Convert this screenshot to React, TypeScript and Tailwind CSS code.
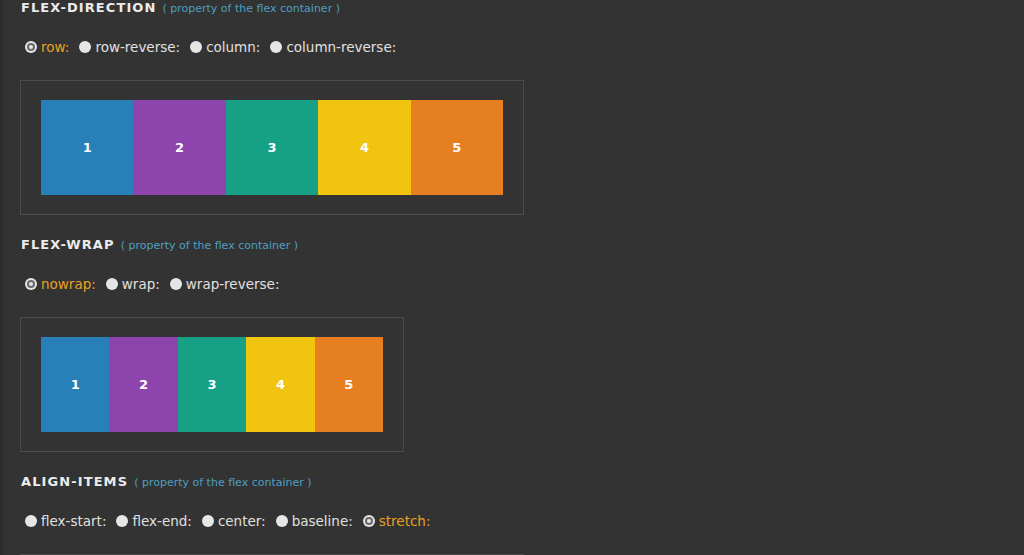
import React from "react";

type Section = {
  title: string;
  options: string[];
  selected: string;
  width: string;
};

const sections: Section[] = [
  {
    title: "FLEX-DIRECTION",
    options: ["row", "row-reverse", "column", "column-reverse"],
    selected: "row",
    width: "w-[504px]",
  },
  {
    title: "FLEX-WRAP",
    options: ["nowrap", "wrap", "wrap-reverse"],
    selected: "nowrap",
    width: "w-[384px]",
  },
  {
    title: "ALIGN-ITEMS",
    options: ["flex-start", "flex-end", "center", "baseline", "stretch"],
    selected: "stretch",
    width: "w-[504px]",
  },
];

const boxes = [
  { n: 1, bg: "bg-[#2980b9]" },
  { n: 2, bg: "bg-[#8e44ad]" },
  { n: 3, bg: "bg-[#16a085]" },
  { n: 4, bg: "bg-[#f1c40f]" },
  { n: 5, bg: "bg-[#e67e22]" },
];

function Radio({ checked }: { checked: boolean }) {
  if (checked) {
    return (
      <span className="w-3 h-3 rounded-full bg-[#e6e6e6] flex items-center justify-center shrink-0">
        <span className="w-2 h-2 rounded-full bg-[#6a6a6a] flex items-center justify-center">
          <span className="w-1 h-1 rounded-full bg-[#e6e6e6]" />
        </span>
      </span>
    );
  }
  return <span className="w-3 h-3 rounded-full bg-[#e6e6e6] shrink-0" />;
}

function FlexSection({ section }: { section: Section }) {
  return (
    <section className="mb-[22px]">
      <h3 className="flex items-baseline gap-[6px] h-4 leading-4">
        <span className="text-[13px] font-bold tracking-[1.1px] text-[#ececec]">{section.title}</span>
        <span className="text-[11px] text-[#4e9fc0]">( property of the flex container )</span>
      </h3>

      <div className="mt-[21px] h-5 flex items-center pl-1 text-[13.5px]">
        {section.options.map((opt) => {
          const on = opt === section.selected;
          return (
            <label key={opt} className="flex items-center gap-1 mr-[10px]">
              <Radio checked={on} />
              <span className={on ? "text-[#e8a022]" : "text-[#e0e0e0]"}>{opt}:</span>
            </label>
          );
        })}
      </div>

      <div className={`mt-[23px] -ml-px ${section.width} border border-[#4b4b4b] px-5 py-[19px]`}>
        <div className="flex h-[95px]">
          {boxes.map((b) => (
            <div
              key={b.n}
              className={`flex-1 ${b.bg} flex items-center justify-center text-[13px] font-semibold text-white`}
            >
              {b.n}
            </div>
          ))}
        </div>
      </div>
    </section>
  );
}

export default function App() {
  return (
    <div
      className="h-[555px] overflow-hidden bg-[#333333] border-l-[3px] border-[#2c2c2c] pl-[18px]"
      style={{ fontFamily: '"DejaVu Sans", Verdana, sans-serif' }}
    >
      {sections.map((s) => (
        <FlexSection key={s.title} section={s} />
      ))}
    </div>
  );
}
